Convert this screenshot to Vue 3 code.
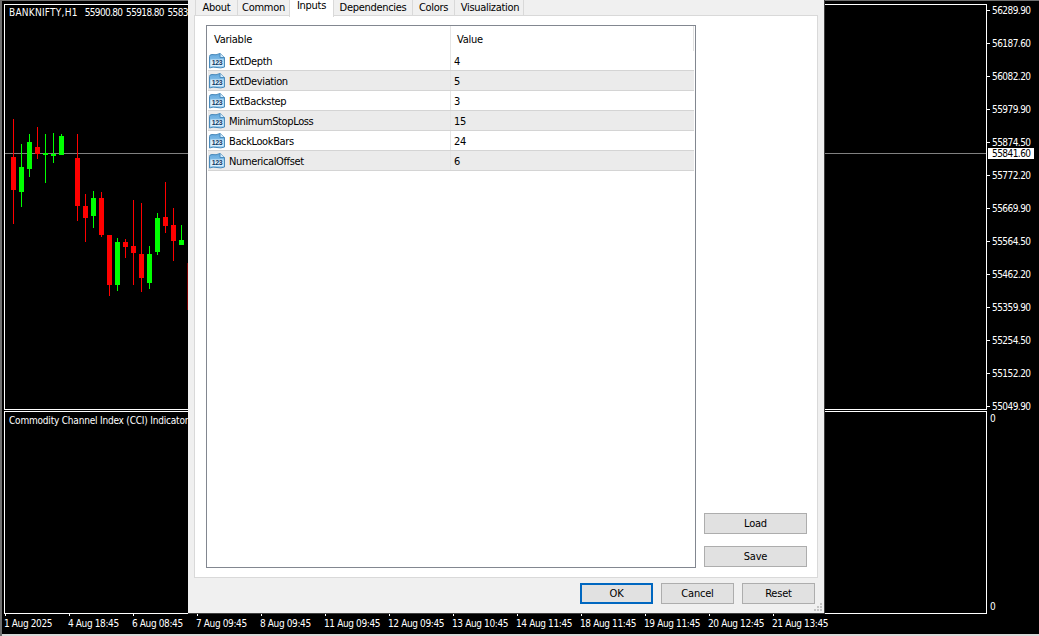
<script setup>
const candles = [
  [13, 119, 224, 157, 190, 'r'], [21, 144, 207, 167, 192, 'g'], [29, 134, 177, 142, 169, 'g'],
  [37, 127, 159, 147, 154, 'r'], [45, 134, 183, 153, 155, 'g'], [53, 133, 163, 154, 156, 'g'],
  [61, 134, 155, 136, 155, 'g'], [77, 134, 221, 158, 206, 'r'], [85, 194, 242, 206, 218, 'r'],
  [93, 191, 228, 198, 216, 'g'], [101, 192, 237, 198, 235, 'r'], [109, 235, 296, 235, 285, 'r'],
  [117, 238, 291, 242, 285, 'g'], [125, 239, 258, 242, 247, 'r'], [133, 200, 285, 246, 253, 'r'],
  [141, 203, 292, 254, 278, 'r'], [149, 246, 289, 254, 283, 'g'], [157, 213, 255, 218, 252, 'g'],
  [165, 182, 233, 217, 226, 'r'], [173, 208, 261, 225, 241, 'r'], [181, 225, 245, 240, 245, 'g']
].map(([x, wt, wb, bt, bb, c]) => ({ x, wt, wb, bt, bb, c }))

// Pane content starts at x=5, y=5 in page coordinates
const wickStyle = (k) => ({ left: `${k.x - 5}px`, top: `${k.wt - 5}px`, height: `${k.wb - k.wt}px` })
const bodyStyle = (k) => ({ left: `${k.x - 7}px`, top: `${k.bt - 5}px`, height: `${k.bb - k.bt}px` })

const prices = ['56289.90', '56187.60', '56082.20', '55979.90', '55874.50', '55772.20', '55669.90',
  '55564.50', '55462.20', '55359.90', '55254.50', '55152.20', '55049.90']
const times = ['1 Aug 2025', '4 Aug 18:45', '6 Aug 08:45', '7 Aug 09:45', '8 Aug 09:45', '11 Aug 09:45',
  '12 Aug 09:45', '13 Aug 10:45', '14 Aug 11:45', '18 Aug 11:45', '19 Aug 11:45', '20 Aug 12:45', '21 Aug 13:45']
const tabs = ['About', 'Common', 'Inputs', 'Dependencies', 'Colors', 'Visualization']
const rows = [
  { name: 'ExtDepth', value: '4' }, { name: 'ExtDeviation', value: '5' }, { name: 'ExtBackstep', value: '3' },
  { name: 'MinimumStopLoss', value: '15' }, { name: 'BackLookBars', value: '24' }, { name: 'NumericalOffset', value: '6' }
]
</script>

<template>
  <div class="terminal">
    <div class="charts">
      <div class="panes">
        <div class="pane main-pane">
          <div class="legend"><span class="sym">BANKNIFTY,H1</span><span class="ohlc">55900.80 55918.80 5583</span></div>
          <div class="crosshair"></div>
          <template v-for="k in candles" :key="k.x">
            <div class="wick" :class="k.c" :style="wickStyle(k)"></div>
            <div class="body" :class="k.c" :style="bodyStyle(k)"></div>
          </template>
          <div class="cut-candle"></div>
        </div>
        <div class="pane sub-pane">
          <div class="legend">Commodity Channel Index (CCI) Indicator</div>
        </div>
      </div>
      <div class="axis">
        <div class="price-scale">
          <div v-for="p in prices" :key="p" class="price">{{ p }}</div>
          <div class="current">55841.60</div>
        </div>
        <div class="sub-scale"><span>0</span><span>0</span></div>
      </div>
    </div>
    <div class="times">
      <div v-for="t in times" :key="t" class="time">{{ t }}</div>
    </div>

    <div class="dialog">
      <div class="tabs">
        <div v-for="t in tabs" :key="t" class="tab" :class="{ active: t === 'Inputs' }">{{ t }}</div>
      </div>
      <div class="panel">
        <div class="list">
          <div class="head">
            <div class="head-cell var">Variable</div>
            <div class="head-cell val">Value</div>
          </div>
          <div v-for="r in rows" :key="r.name" class="row">
            <div class="cell name">
              <svg class="ico" width="16" height="16" viewBox="0 0 16 16">
                <defs>
                  <linearGradient id="icoFill" x1="0" y1="0" x2="0" y2="1">
                    <stop offset="0" stop-color="#5fa6dc" />
                    <stop offset="1" stop-color="#a9d5f2" />
                  </linearGradient>
                </defs>
                <path d="M0.5 3.5 Q0.5 1.5 3 1.5 Q7 2.5 11 0.5 L15.5 4.5 L15.5 14 Q12 15.5 8 14.5 Q4 13.5 0.5 15 Z" fill="url(#icoFill)" stroke="#4a8abb" />
                <path d="M11 0.5 L11 4.5 L15.5 4.5" fill="#d6ecfa" stroke="#4a8abb" />
                <rect x="1.5" y="6.5" width="13" height="6.5" fill="#dcEffb" />
                <text x="8" y="12.3" class="ico-text">123</text>
              </svg>
              <span class="name-text">{{ r.name }}</span>
            </div>
            <div class="cell value">{{ r.value }}</div>
          </div>
        </div>
        <div class="side">
          <button class="btn side-btn">Load</button>
          <button class="btn side-btn">Save</button>
        </div>
      </div>
      <div class="footer">
        <button class="btn foot-btn default">OK</button>
        <button class="btn foot-btn">Cancel</button>
        <button class="btn foot-btn">Reset</button>
      </div>
      <svg class="grip" width="8" height="8" viewBox="0 0 8 8">
        <path d="M6 0h2v2H6zM3 3h2v2H3zM6 3h2v2H6zM0 6h2v2H0zM3 6h2v2H3zM6 6h2v2H6z" fill="#c4c4c4" />
      </svg>
    </div>
  </div>
</template>

<style>
html, body { margin: 0; background: #000; }
</style>

<style scoped>
.terminal {
  position: relative;
  width: 1039px;
  height: 636px;
  box-sizing: border-box;
  padding: 4px 0 2px 4px;
  background: #000;
  box-shadow: inset 2px 1px 0 #6f6f6f, inset 0 -2px 0 #d8d8d8;
  display: flex;
  flex-direction: column;
  overflow: hidden;
  color: #fff;
  font-family: "DejaVu Sans", "Liberation Sans", sans-serif;
  font-stretch: condensed;
  font-size: 10px;
}
.charts { display: flex; height: 610px; }
.panes { width: 983px; display: flex; flex-direction: column; gap: 1px; }
.pane { position: relative; box-sizing: border-box; border: 1px solid #fff; overflow: hidden; }
.main-pane { height: 406px; }
.sub-pane { height: 203px; }
.legend { width: 183px; box-sizing: border-box; padding: 1px 0 0 4px; line-height: 13px; white-space: nowrap; letter-spacing: -0.2px; }
.sub-pane .legend { padding-top: 2px; }
.sym { letter-spacing: 0.25px; margin-right: 7px; }
.ohlc { letter-spacing: -0.65px; word-spacing: 1.5px; }
.crosshair { position: absolute; left: 0; right: 0; top: 148px; height: 1px; background: #808080; }
.wick, .body { position: absolute; }
.wick { width: 1px; }
.body { width: 5px; }
.r { background: #f00; }
.g { background: #0f0; }
.cut-candle { position: absolute; left: 182px; top: 258px; width: 1px; height: 47px; background: #7a0000; }

.axis { flex: 1; display: flex; flex-direction: column; }
.price-scale { position: relative; height: 407px; display: flex; flex-direction: column; gap: 20px; letter-spacing: -0.55px; }
.price { height: 13px; line-height: 13px; padding-left: 5px; position: relative; }
.price::before { content: ""; position: absolute; left: 0; top: 6px; width: 3px; height: 1px; background: #fff; }
.current {
  position: absolute; left: 1px; top: 144px; width: 46px; height: 11px; line-height: 11px;
  background: #fff; color: #000; box-sizing: border-box; padding-left: 4px;
}
.sub-scale {
  flex: 1; display: flex; flex-direction: column; justify-content: space-between;
  padding: 1px 0 0 3px; height: 196px; line-height: 13px;
}
.sub-scale span:last-child { margin-bottom: 1px; }

.times { display: flex; height: 20px; letter-spacing: -0.38px; }
.time { width: 64px; position: relative; line-height: 13px; padding-top: 3px; white-space: nowrap; box-sizing: border-box; }
.time::before { content: ""; position: absolute; left: 1px; top: -1px; width: 1px; height: 3px; background: #fff; }

.dialog {
  position: absolute; left: 188px; top: 0; width: 637px; height: 614px; box-sizing: border-box;
  background: #f0f0f0; color: #000;
  border-right: 1px solid #404040; border-bottom: 1px solid #404040;
  padding: 0 6px 0 6px;
  display: flex; flex-direction: column;
  font-size: 11px;
  letter-spacing: -0.38px;
}
.tabs { display: flex; height: 15px; padding-left: 2px; position: relative; z-index: 1; letter-spacing: -0.3px; }
.tab {
  box-sizing: border-box; height: 15px; padding: 0; line-height: 15px; text-align: center;
  border: 1px solid #d9d9d9; border-width: 0 1px 0 1px; margin-left: -1px; background: #f0f0f0;
}
.tab:nth-child(1) { width: 43px; }
.tab:nth-child(2) { width: 53px; }
.tab:nth-child(3) { width: 45px; }
.tab:nth-child(4) { width: 80px; }
.tab:nth-child(5) { width: 43px; }
.tab:nth-child(6) { width: 70px; padding-left: 2px; }
.tab.active { height: 17px; background: #fff; line-height: 11px; position: relative; }
.panel {
  box-sizing: border-box; width: 624px; height: 563px; background: #fff; border: 1px solid #d9d9d9;
  padding: 9px 10px 9px 11px; display: flex; gap: 8px;
}
.list { box-sizing: border-box; width: 490px; height: 543px; border: 1px solid #828790; padding-left: 1px; }
.head { display: flex; height: 25px; width: 486px; line-height: 27px; }
.head-cell { box-sizing: border-box; }
.head-cell.var { width: 243px; padding-left: 6px; border-right: 1px solid #e5e5e5; letter-spacing: -0.25px; }
.head-cell.val { width: 243px; padding-left: 6px; border-right: 1px solid #e0e0e0; letter-spacing: -0.25px; }
.row { display: flex; height: 20px; width: 486px; box-sizing: border-box; border-bottom: 1px solid #d4d4d4; line-height: 21px; }
.row:nth-child(odd) { background: #ebebeb; }
.cell { box-sizing: border-box; }
.name { width: 243px; display: flex; align-items: flex-start; gap: 4px; padding-left: 1px; border-right: 1px solid #e5e5e5; }
.ico { flex: none; margin-top: 2px; }
.value { padding-left: 3px; color: #000; }
.ico-text { font-family: "Liberation Sans", sans-serif; font-size: 7px; font-weight: 700; fill: #0e3a66; text-anchor: middle; letter-spacing: -0.4px; }
.side { width: 103px; display: flex; flex-direction: column; justify-content: flex-end; gap: 12px; padding-bottom: 1px; }
.btn {
  box-sizing: border-box; height: 21px; background: #e1e1e1; border: 1px solid #adadad; border-radius: 0;
  font: inherit; font-stretch: inherit; letter-spacing: -0.2px; color: #000; padding: 0; line-height: 19px; text-align: center;
}
.side-btn { width: 103px; }
.footer { display: flex; justify-content: flex-end; gap: 8px; padding: 5px 3px 0 0; }
.foot-btn { width: 73px; }
.foot-btn.default { border: 2px solid #0067c0; line-height: 17px; }
.grip { position: absolute; right: 2px; bottom: 2px; }
</style>
